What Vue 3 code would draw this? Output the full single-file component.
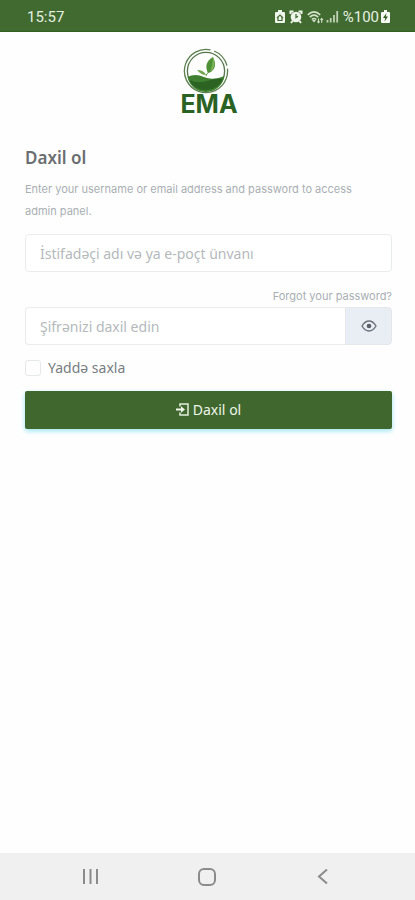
<script setup>
import { ref } from 'vue'

const username = ref('')
const password = ref('')
const remember = ref(false)
const visible = ref(false)
</script>

<template>
  <div class="screen">
    <header class="status">
      <span class="clock">15:57</span>
      <div class="indicators">
        <svg width="10" height="14" viewBox="0 0 10 14" aria-hidden="true">
          <path d="M3 0h4v2h2q1 0 1 1v9q0 1-1 1H1q-1 0-1-1V3q0-1 1-1h2z" fill="#eef5ea" />
          <path d="M2 8l3-3 3 3M3 7.500v3h4v-3" fill="none" stroke="#416a30" stroke-width="1.200" />
        </svg>
        <svg class="alarm" width="14" height="14" viewBox="0 0 14 14" aria-hidden="true">
          <path d="M1.500 4V1.500h3M9.500 1.500h3V4M3.500 11L2 13M10.500 11l1.500 2" fill="none" stroke="#eef5ea" stroke-width="2" />
          <circle cx="7" cy="7" r="5.300" fill="#eef5ea" />
          <path d="M7 4v3.500l2-1.200" fill="none" stroke="#416a30" stroke-width="1.300" />
        </svg>
        <svg width="17" height="14" viewBox="0 0 17 14" aria-hidden="true">
          <path d="M.8 4.800Q7-1 13.200 4.800M2.800 7.200q4.200-4 8.400 0M4.800 9.500q2.200-2 4.400 0" fill="none" stroke="#d5e3cd" stroke-width="1.600" />
          <path d="M7 12.500L5 10h4z" fill="#d5e3cd" />
          <path d="M11.500 8.500v4.200M10.300 11.500l1.200 1.300 1.200-1.300M14.700 12.800V8.600M13.500 9.900l1.200-1.300 1.200 1.300" fill="none" stroke="#d5e3cd" stroke-width="1.100" />
        </svg>
        <svg width="13" height="13" viewBox="0 0 13 13" aria-hidden="true">
          <path d="M1.500 12.500V10M4.700 12.500V8M8 12.500V5M11.200 12.500V1" fill="none" stroke="#bfd2b5" stroke-width="1.800" />
        </svg>
        <span class="percent">%100</span>
        <svg width="9" height="14" viewBox="0 0 9 14" aria-hidden="true">
          <path d="M3 0h3v2h2q1 0 1 1v9q0 1-1 1H1q-1 0-1-1V3q0-1 1-1h2z" fill="#f5faf2" />
          <path d="M5.500 3L2 8h2.200L3.500 11.500 7 6.500H4.800z" fill="#315b22" />
        </svg>
      </div>
    </header>

    <main class="content">
      <svg class="logo" width="68" height="76" viewBox="0 0 68 76" role="img" aria-label="EMA">
        <circle cx="31" cy="23" r="21.600" fill="none" stroke="#5b7f4d" stroke-width="1.300" stroke-dasharray="98 4 20 3 10.700 0" transform="rotate(20 31 23)" />
        <circle cx="31" cy="23" r="18.600" fill="none" stroke="#55764a" stroke-width="1.300" />
        <path d="M12.500 29Q20 25 29 29T49.500 28A18.800 18.800 0 0 1 12.500 29z" fill="#3f8030" />
        <path d="M14 32q9 4 18 1t16-2A18.800 18.800 0 0 1 14 32z" fill="#2c6323" />
        <path d="M33 25Q28 15 38 9q5 10-2 15z" fill="#4f9136" />
        <path d="M38 9Q42 19 35 24Q38 17 38 9z" fill="#7db45a" />
        <path d="M31 28q0-2 3-4" fill="none" stroke="#5d983f" stroke-width="1" />
        <path d="M31 27Q26 27 22 22q7 0 9 5z" fill="#70a64c" />
        <text x="34" y="65" text-anchor="middle" class="wordmark">EMA</text>
      </svg>

      <form class="form" @submit.prevent>
        <h1>Daxil ol</h1>
        <p class="intro">Enter your username or email address and password to access admin panel.</p>

        <input v-model="username" class="field" type="text" aria-label="İstifadəçi adı və ya e-poçt ünvanı" placeholder="İstifadəçi adı və ya e-poçt ünvanı" />

        <a class="forgot" href="#">Forgot your password?</a>
        <div class="group">
          <input v-model="password" class="field" :type="visible ? 'text' : 'password'" aria-label="Şifrənizi daxil edin" placeholder="Şifrənizi daxil edin" />
          <button class="reveal" type="button" aria-label="Şifrəni göstər" @click="visible = !visible">
            <svg width="16" height="12" viewBox="0 0 16 12" aria-hidden="true">
              <path d="M1 6Q4 1 8 1t7 5q-3 5-7 5T1 6z" fill="none" stroke="#6b727a" stroke-width="1.400" />
              <circle cx="8" cy="6" r="2.300" fill="#596068" />
            </svg>
          </button>
        </div>

        <label class="remember">
          <input v-model="remember" type="checkbox" />
          <span>Yaddə saxla</span>
        </label>

        <button class="submit" type="submit">
          <svg width="13" height="13" viewBox="0 0 13 13" aria-hidden="true">
            <path d="M4 3.500V1h8v11H4V9.500" fill="none" stroke="#e3eedd" stroke-width="1.500" />
            <path d="M0 6.500h7" stroke="#eff6eb" stroke-width="2" />
            <path d="M5 3.200l4 3.300-4 3.300z" fill="#eff6eb" />
          </svg>
          <span>Daxil ol</span>
        </button>
      </form>
    </main>

    <nav class="navbar" aria-label="System">
      <button type="button" aria-label="Recents">
        <svg width="18" height="18" viewBox="0 0 18 18" aria-hidden="true">
          <path d="M2 1v15M8.500 1v15M15 1v15" stroke="#8b8b8b" stroke-width="2" />
        </svg>
      </button>
      <button type="button" aria-label="Home">
        <svg width="18" height="18" viewBox="0 0 18 18" aria-hidden="true">
          <rect x="1" y="1" width="16" height="16" rx="5" fill="none" stroke="#8b8b8b" stroke-width="2" />
        </svg>
      </button>
      <button type="button" aria-label="Back">
        <svg width="18" height="18" viewBox="0 0 18 18" aria-hidden="true">
          <path d="M14 1.500L6 8.500l8 7" fill="none" stroke="#8b8b8b" stroke-width="2" />
        </svg>
      </button>
    </nav>
  </div>
</template>

<style>
body {
  margin: 0;
  background: #fefefe;
}
</style>

<style scoped>
.screen {
  display: flex;
  flex-direction: column;
  min-height: 100vh;
  background: #fefefe;
  color: #6c757d;
  font-family: "Noto Sans", "Open Sans", sans-serif;
}

.screen * {
  box-sizing: border-box;
}

.screen svg {
  display: block;
  flex: none;
}

button,
input {
  margin: 0;
  font: inherit;
}

.status {
  display: flex;
  align-items: center;
  justify-content: space-between;
  height: 32px;
  padding: 2px 25px 0 27px;
  border-bottom: 1px solid #315f1e;
  background: #416a30;
  color: #e6f0e0;
  font-family: Roboto, sans-serif;
  font-size: 15px;
}

.indicators {
  display: flex;
  align-items: center;
  gap: 2px;
}

.alarm {
  margin: 0 2px;
}

.percent {
  margin-left: 2px;
}

.content {
  flex: 1;
  padding: 16px 23px 24px 25px;
}

.logo {
  margin: 0 auto;
}

.wordmark {
  fill: #296222;
  font-family: Inter, sans-serif;
  font-size: 25px;
  font-weight: 700;
}

.form {
  display: flex;
  flex-direction: column;
  margin-top: 22px;
}

h1 {
  margin: 0 0 8px;
  color: #6a6e70;
  font-size: 17px;
  font-weight: 600;
  line-height: 24px;
}

.intro {
  margin: 0 0 12px;
  padding-right: 16px;
  color: #a9afb3;
  font-family: Inter, sans-serif;
  font-size: 11px;
  line-height: 22px;
}

.field {
  width: 100%;
  min-width: 0;
  height: 38px;
  padding: 0 14px;
  border: 1px solid #e9ebed;
  border-radius: 4px;
  background: #fff;
  color: #6c757d;
  font-size: 14px;
}

.field::placeholder {
  color: #b4b9bc;
  opacity: 1;
}

.forgot {
  align-self: flex-end;
  margin-top: 13px;
  color: #a9afb3;
  font-family: Inter, sans-serif;
  font-size: 11px;
  line-height: 22px;
  text-decoration: none;
}

.group {
  display: flex;
}

.group .field {
  flex: 1;
  border-right: 0;
  border-radius: 4px 0 0 4px;
}

.reveal {
  display: grid;
  place-items: center;
  width: 47px;
  padding: 0;
  border: 1px solid #e4e8ed;
  border-radius: 0 4px 4px 0;
  background: #e9edf4;
}

.remember {
  display: flex;
  align-items: center;
  align-self: flex-start;
  gap: 7px;
  margin: 12px 0;
  color: #777d81;
  font-size: 14px;
  line-height: 22px;
}

.remember input {
  width: 16px;
  height: 16px;
  border: 1px solid #e5e7e9;
  border-radius: 3px;
  background: #fff;
  appearance: none;
}

.remember input:checked {
  background: #40682e;
}

.submit {
  display: flex;
  align-items: center;
  justify-content: center;
  gap: 4px;
  height: 38px;
  padding: 0 0 2px;
  border: 0;
  border-radius: 2px;
  background: #40682e;
  box-shadow: 0 2px 5px #9ce5ee;
  color: #eff6eb;
  font-size: 14px;
}

.navbar {
  display: flex;
  align-items: center;
  justify-content: space-between;
  height: 47px;
  padding: 0 84px 0 82px;
  background: #f0f0f0;
}

.navbar button {
  padding: 0;
  border: 0;
  background: transparent;
}
</style>
